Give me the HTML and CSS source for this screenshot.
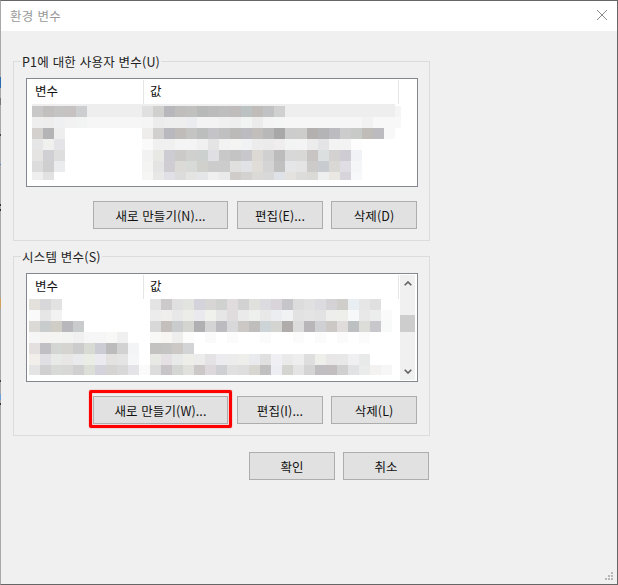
FILE: index.html
```html
<!DOCTYPE html>
<html lang="ko">
<head>
<meta charset="utf-8">
<title>환경 변수</title>
<link rel="stylesheet" href="styles.css">
</head>
<body>
<div class="window">
  <div class="edge-strip"></div>
  <header class="titlebar">
    <span class="title">환경 변수</span>
    <svg class="close" width="10" height="10" viewBox="0 0 10 10"><path d="M0 0L10 10M10 0L0 10"/></svg>
  </header>
  <main class="content">
    <section class="group">
      <h2 class="legend">P1에 대한 사용자 변수(U)</h2>
      <div class="list">
        <div class="list-head"><div class="col col-name">변수</div><div class="col col-value">값</div></div>
        <svg class="mosaic" width="390" height="82" viewBox="27 104 390 82" aria-hidden="true">
          <rect class="band" x="32" y="104" width="363" height="13"/>
          <g transform="translate(0 106)">
            <rect x="32" fill="#c8c8c8"/><rect x="43" fill="#c2c0be"/><rect x="54" fill="#c4c4c2"/><rect x="65" fill="#c6c2c2"/><rect x="76" fill="#ccced0"/>
            <rect x="142" fill="#e0e0e0"/><rect x="153" fill="#d0d0ce"/><rect x="164" fill="#b8b8bc"/><rect x="175" fill="#c0bebc"/><rect x="186" fill="#c0c0be"/><rect x="197" fill="#b8baba"/><rect x="208" fill="#bcbcbc"/><rect x="219" fill="#bebebe"/><rect x="230" fill="#c0bcbc"/><rect x="241" fill="#bcc2c2"/><rect x="252" fill="#c0bcba"/><rect x="263" fill="#c0c2c4"/><rect x="274" fill="#d0d0d0"/>
            <rect x="395" width="6" fill="#f5f5f5" class="narrow"/>
          </g>
          <g transform="translate(0 117)">
            <rect x="32" fill="#eeeeee"/><rect x="43" fill="#ededed"/><rect x="54" fill="#eef0f1"/><rect x="65" fill="#f2f2f2"/><rect x="76" fill="#f2f4f4"/><rect x="87" fill="#f6f6f6"/><rect x="98" fill="#f6f6f6"/><rect x="109" fill="#f6f6f6"/><rect x="120" fill="#f6f6f6"/><rect x="131" fill="#f6f6f6"/>
            <rect x="142" fill="#f5f5f5"/><rect x="153" fill="#ececec"/><rect x="164" fill="#eeeeee"/><rect x="175" fill="#eeeeee"/><rect x="186" fill="#ebecef"/><rect x="197" fill="#f3f3f3"/><rect x="208" fill="#f3f3f3"/><rect x="219" fill="#f0f0f0"/><rect x="230" fill="#eeeeee"/><rect x="241" fill="#f2f4f4"/><rect x="252" fill="#ececec"/><rect x="263" fill="#f4f4f4"/><rect x="274" fill="#f4f6f6"/><rect x="285" fill="#f6f6f6"/><rect x="296" fill="#f6f6f6"/><rect x="307" fill="#f6f6f6"/><rect x="318" fill="#f6f6f6"/><rect x="329" fill="#f6f6f6"/><rect x="340" fill="#f6f6f6"/><rect x="351" fill="#f6f6f6"/><rect x="362" fill="#f2f2f2"/><rect x="373" fill="#f8f8f8"/><rect x="384" fill="#f8f8f8"/><rect x="395" class="narrow" fill="#f8f8f8"/>
          </g>
          <g transform="translate(0 128)">
            <rect x="32" fill="#d4d0ce"/><rect x="43" fill="#b4b4b6"/><rect x="54" fill="#eeeeee"/>
            <rect x="142" fill="#efedeb"/><rect x="153" fill="#d2d0ce"/><rect x="164" fill="#b8b8be"/><rect x="175" fill="#c0bcba"/><rect x="186" fill="#c4c4c2"/><rect x="197" fill="#bcbebe"/><rect x="208" fill="#c4c4c8"/><rect x="219" fill="#c0c0c0"/><rect x="230" fill="#bcbab8"/><rect x="241" fill="#bcbcc0"/><rect x="252" fill="#c2bebc"/><rect x="263" fill="#b8b8b8"/><rect x="274" fill="#a8a8a8"/><rect x="285" fill="#cccccc"/><rect x="296" fill="#cdcdcb"/><rect x="307" fill="#b4b0b0"/><rect x="318" fill="#b4b4b6"/><rect x="329" fill="#bcbcc0"/><rect x="340" fill="#cccccc"/><rect x="351" fill="#c8cac8"/><rect x="362" fill="#c0bcb8"/><rect x="373" fill="#bcbcc0"/><rect x="384" fill="#f8f8f8"/>
          </g>
          <g transform="translate(0 139)">
            <rect x="32" fill="#e6e6e6"/><rect x="43" fill="#f0f0ee"/><rect x="54" fill="#e4e4e8"/>
            <rect x="142" fill="#fafafa"/><rect x="153" fill="#f0f0f0"/><rect x="164" fill="#f0f0f0"/><rect x="175" fill="#f4f4f4"/><rect x="186" fill="#f4f4f4"/><rect x="197" fill="#f0f0f0"/><rect x="208" fill="#e4e4e4"/><rect x="219" fill="#f2f2f2"/><rect x="230" fill="#f4f4f2"/><rect x="241" fill="#f0f2f4"/><rect x="252" fill="#ececec"/><rect x="263" fill="#ebebeb"/><rect x="274" fill="#efeded"/><rect x="285" fill="#f2f4f4"/><rect x="296" fill="#f4f4f4"/><rect x="307" fill="#ececec"/><rect x="318" fill="#e4e4e6"/><rect x="329" fill="#f3f3f3"/><rect x="340" fill="#f3f3f3"/><rect x="351" fill="#fdfdfd"/>
          </g>
          <g transform="translate(0 150)">
            <rect x="32" fill="#e6e4e2"/><rect x="43" fill="#d0d0d4"/><rect x="54" fill="#dedede"/>
            <rect x="142" fill="#f2f2f2"/><rect x="153" fill="#e8e8e4"/><rect x="164" fill="#ccccd2"/><rect x="175" fill="#cccac8"/><rect x="186" fill="#d0d0ce"/><rect x="197" fill="#ccd0ce"/><rect x="208" fill="#e0e0e4"/><rect x="219" fill="#c8c8c8"/><rect x="230" fill="#c4c4c4"/><rect x="241" fill="#c8c8cc"/><rect x="252" fill="#dcd8d4"/><rect x="263" fill="#d0d0d0"/><rect x="274" fill="#bcbcbc"/><rect x="285" fill="#d8d8d8"/><rect x="296" fill="#d8d8d6"/><rect x="307" fill="#c8c4c4"/><rect x="318" fill="#dcdfe0"/><rect x="329" fill="#d4d2d0"/><rect x="340" fill="#d0ccd4"/><rect x="351" fill="#f0f2f5"/>
          </g>
          <g transform="translate(0 161)">
            <rect x="32" fill="#dcdcdc"/><rect x="43" fill="#cfcfcf"/><rect x="54" fill="#eaecee"/>
            <rect x="142" fill="#f4f4f2"/><rect x="153" fill="#e4e4e4"/><rect x="164" fill="#cfccd2"/><rect x="175" fill="#dcdad6"/><rect x="186" fill="#d8dad8"/><rect x="197" fill="#d0d0cc"/><rect x="208" fill="#cccccc"/><rect x="219" fill="#cccccc"/><rect x="230" fill="#e0e0de"/><rect x="241" fill="#e0e2e6"/><rect x="252" fill="#e0dcd8"/><rect x="263" fill="#d4d4d4"/><rect x="274" fill="#c0c0c0"/><rect x="285" fill="#e4e6e8"/><rect x="296" fill="#e4e4e4"/><rect x="307" fill="#cdcbc9"/><rect x="318" fill="#c8ccd0"/><rect x="329" fill="#dad8d4"/><rect x="340" fill="#e0dee4"/><rect x="351" fill="#f4f6f8"/>
          </g>
          <g class="last-user" transform="translate(0 172)">
            <rect x="32" fill="#efefef"/><rect x="43" fill="#e2e2e2"/>
            <rect x="142" fill="#f6f6f4"/><rect x="153" fill="#e8e8e6"/><rect x="164" fill="#e0e0e6"/><rect x="175" fill="#dcdcdc"/><rect x="186" fill="#e4e4e2"/><rect x="197" fill="#e4e6e8"/><rect x="208" fill="#f0f0f0"/><rect x="219" fill="#eaeaea"/><rect x="230" fill="#d0ccca"/><rect x="241" fill="#d4d2d0"/><rect x="252" fill="#dcdad6"/><rect x="263" fill="#d8d8d8"/><rect x="274" fill="#dfe2e6"/><rect x="285" fill="#e4e2de"/><rect x="296" fill="#dcdcda"/><rect x="307" fill="#dadad6"/><rect x="318" fill="#eef0f0"/><rect x="329" fill="#ebe8e4"/><rect x="340" fill="#d8d4dc"/><rect x="351" fill="#f6f8fa"/>
          </g>
        </svg>
      </div>
      <div class="actions">
        <button class="btn btn-new" type="button">새로 만들기(N)...</button>
        <button class="btn btn-edit" type="button">편집(E)...</button>
        <button class="btn" type="button">삭제(D)</button>
      </div>
    </section>

    <section class="group group-system">
      <h2 class="legend">시스템 변수(S)</h2>
      <div class="list">
        <div class="list-head"><div class="col col-name">변수</div><div class="col col-value">값</div></div>
        <svg class="mosaic" width="390" height="82" viewBox="27 299 390 82" aria-hidden="true">
          <g transform="translate(0 299)">
            <rect x="29" fill="#e4e0dc"/><rect x="40" fill="#d8d8da"/><rect x="51" fill="#e2e2e2"/>
            <rect x="150" fill="#e4e4e4"/><rect x="161" fill="#cccaca"/><rect x="172" fill="#e0e0e0"/><rect x="183" fill="#e2e4e0"/><rect x="194" fill="#d4d2da"/><rect x="205" fill="#d8d6d4"/><rect x="216" fill="#d0d2d0"/><rect x="227" fill="#e0dcde"/><rect x="238" fill="#d2d2d2"/><rect x="249" fill="#e0e0dc"/><rect x="260" fill="#dcdce0"/><rect x="271" fill="#d8d4da"/><rect x="282" fill="#c6c6ca"/><rect x="293" fill="#dcdcdc"/><rect x="304" fill="#e0e0e0"/><rect x="315" fill="#dcdce0"/><rect x="326" fill="#d4d2d4"/><rect x="337" fill="#d0ceca"/><rect x="348" fill="#e8eef2"/><rect x="359" fill="#e6e6e6"/><rect x="370" fill="#e0e0e0"/>
          </g>
          <g transform="translate(0 310)">
            <rect x="29" fill="#fafafa"/><rect x="40" fill="#e6e6e6"/><rect x="51" fill="#f2f2f2"/>
            <rect x="150" fill="#ececec"/><rect x="161" fill="#f0eeec"/><rect x="172" fill="#e8e8e8"/><rect x="183" fill="#ecece8"/><rect x="194" fill="#eaeaee"/><rect x="205" fill="#f0f0ec"/><rect x="216" fill="#e6e6e6"/><rect x="227" fill="#e0dcde"/><rect x="238" fill="#eaeaea"/><rect x="249" fill="#eef0ee"/><rect x="260" fill="#e8e8e8"/><rect x="271" fill="#ecedf0"/><rect x="282" fill="#f0f2f4"/><rect x="293" fill="#e2e2e2"/><rect x="304" fill="#e4e4e4"/><rect x="315" fill="#e2e2e2"/><rect x="326" fill="#eeeeec"/><rect x="337" fill="#eeeeea"/><rect x="348" fill="#f6f8fa"/><rect x="359" fill="#e8e8e8"/><rect x="370" fill="#eceeee"/><rect x="381" fill="#fafafa"/>
          </g>
          <g transform="translate(0 321)">
            <rect x="29" fill="#dcdad6"/><rect x="40" fill="#c8cccc"/><rect x="51" fill="#d0ccc6"/><rect x="62" fill="#b8b8bc"/><rect x="73" fill="#c8cccc"/>
            <rect x="150" fill="#d8d8d8"/><rect x="161" fill="#c4bebc"/><rect x="172" fill="#c8cccc"/><rect x="183" fill="#d4d4d0"/><rect x="194" fill="#b0b0b2"/><rect x="205" fill="#d4d4d4"/><rect x="216" fill="#bcbcc0"/><rect x="227" fill="#d8d8da"/><rect x="238" fill="#ccc8c6"/><rect x="249" fill="#c0bebc"/><rect x="260" fill="#ccd4d8"/><rect x="271" fill="#d4d4d0"/><rect x="282" fill="#b0acac"/><rect x="293" fill="#dcdcdc"/><rect x="304" fill="#b8b6b8"/><rect x="315" fill="#cfd0d4"/><rect x="326" fill="#ccc8c6"/><rect x="337" fill="#e0dcdc"/><rect x="348" fill="#bcc0c0"/><rect x="359" fill="#dcdcd8"/><rect x="370" fill="#c8c8cc"/><rect x="381" fill="#f8fafa"/>
          </g>
          <g transform="translate(0 332)">
            <rect x="29" fill="#f6f6f6"/><rect x="40" fill="#f6f4f2"/><rect x="51" fill="#f4f4f2"/><rect x="62" fill="#f2f4f2"/><rect x="73" fill="#f0f0f0"/><rect x="84" fill="#f6f6f6"/><rect x="95" fill="#f6f6f6"/><rect x="106" fill="#f8f8f6"/><rect x="117" fill="#f0f0f0"/>
            <rect x="150" fill="#f8f8f6"/><rect x="161" fill="#f8f6f2"/><rect x="172" fill="#eeeeee"/><rect x="183" fill="#fcfcfa"/><rect x="205" fill="#fafafa"/><rect x="227" fill="#fbfbfb"/><rect x="260" fill="#fbfbfb"/><rect x="293" fill="#fbfbfb"/><rect x="315" fill="#fbfbfb"/><rect x="337" fill="#fbfbfb"/><rect x="359" fill="#fbfbfb"/>
          </g>
          <g transform="translate(0 343)">
            <rect x="29" fill="#e4e0e0"/><rect x="40" fill="#c0c0c4"/><rect x="51" fill="#d4d6d4"/><rect x="62" fill="#d6d4d0"/><rect x="73" fill="#cccccc"/><rect x="84" fill="#d8dad4"/><rect x="95" fill="#ccccd4"/><rect x="106" fill="#bcbcbc"/><rect x="117" fill="#d2d2d2"/><rect x="128" fill="#f2f4f6"/>
            <rect x="150" fill="#c4c2c0"/><rect x="161" fill="#c4c4c2"/><rect x="172" fill="#ccc8c6"/><rect x="183" fill="#d2d4d6"/>
          </g>
          <g transform="translate(0 354)">
            <rect x="29" fill="#f2eeea"/><rect x="40" fill="#e0e0e4"/><rect x="51" fill="#e8eae8"/><rect x="62" fill="#e8e6e4"/><rect x="73" fill="#e8eaec"/><rect x="84" fill="#eaece6"/><rect x="95" fill="#eaeaf0"/><rect x="106" fill="#e4e2e0"/><rect x="117" fill="#e4e4e4"/><rect x="128" fill="#f4f6f8"/>
            <rect x="150" fill="#e8e8e4"/><rect x="161" fill="#e4e0e4"/><rect x="172" fill="#e8eaea"/><rect x="183" fill="#eeeee8"/><rect x="194" fill="#ececec"/><rect x="205" fill="#e4e2e4"/><rect x="216" fill="#ececf0"/><rect x="227" fill="#ececec"/><rect x="238" fill="#eeeeea"/><rect x="249" fill="#e8eaee"/><rect x="260" fill="#e0e0e0"/><rect x="271" fill="#f0f0f4"/><rect x="282" fill="#eaeaea"/><rect x="293" fill="#eeeeee"/><rect x="304" fill="#dedede"/><rect x="315" fill="#eeeeea"/><rect x="326" fill="#e8e6e6"/><rect x="337" fill="#e8e8e8"/><rect x="348" fill="#f0f0f2"/><rect x="359" fill="#e8eaea"/>
          </g>
          <g class="last-system" transform="translate(0 365)">
            <rect x="29" fill="#e4e4e4"/><rect x="40" fill="#d0d0d0"/><rect x="51" fill="#d8dad8"/><rect x="62" fill="#d8d8d6"/><rect x="73" fill="#d0d0d0"/><rect x="84" fill="#dcdfd8"/><rect x="95" fill="#d4d2da"/><rect x="106" fill="#d6d4d2"/><rect x="117" fill="#d8d8d8"/><rect x="128" fill="#e4e4e8"/><rect x="139" fill="#fafafa"/>
            <rect x="150" fill="#dcdcdc"/><rect x="161" fill="#c8c4c8"/><rect x="172" fill="#d4d6d4"/><rect x="183" fill="#e0e0dc"/><rect x="194" fill="#ccc8c8"/><rect x="205" fill="#dcd8dc"/><rect x="216" fill="#ced0d4"/><rect x="227" fill="#e0e0e0"/><rect x="238" fill="#dedede"/><rect x="249" fill="#d8d6d0"/><rect x="260" fill="#c0c0c0"/><rect x="271" fill="#eceef4"/><rect x="282" fill="#d4d4d0"/><rect x="293" fill="#e4e4e4"/><rect x="304" fill="#d4d4d4"/><rect x="315" fill="#c0bec0"/><rect x="326" fill="#c2bec0"/><rect x="337" fill="#d0d0d0"/><rect x="348" fill="#e0e2e4"/><rect x="359" fill="#eaecec"/><rect x="370" fill="#f4f2f0"/><rect x="381" fill="#f6f6f6"/>
          </g>
        </svg>
        <div class="scrollbar">
          <div class="arrow"><svg width="8" height="5" viewBox="0 0 8 5"><path d="M.7 4.3L4 1l3.3 3.3"/></svg></div>
          <div class="track"><div class="thumb"></div></div>
          <div class="arrow"><svg width="8" height="5" viewBox="0 0 8 5"><path d="M.7 .7L4 4l3.3-3.3"/></svg></div>
        </div>
      </div>
      <div class="actions">
        <div class="highlight-wrap">
          <button class="btn btn-new btn-flush" type="button">새로 만들기(W)...</button>
          <span class="highlight"></span>
        </div>
        <button class="btn btn-edit" type="button">편집(I)...</button>
        <button class="btn" type="button">삭제(L)</button>
      </div>
    </section>

    <footer class="footer">
      <button class="btn" type="button">확인</button>
      <button class="btn" type="button">취소</button>
    </footer>
  </main>
  <svg class="grip" width="9" height="9" viewBox="0 0 9 9" aria-hidden="true"><path d="M6 0h2v2H6zM3 3h2v2H3zM6 3h2v2H6zM0 6h2v2H0zM3 6h2v2H3zM6 6h2v2H6z"/></svg>
</div>
</body>
</html>
```

FILE: styles.css
```css
* { box-sizing: border-box; }

html, body { margin: 0; padding: 0; }

body {
  width: 618px;
  height: 585px;
  overflow: hidden;
  font-family: "Noto Sans CJK KR", "Noto Sans", sans-serif;
  font-size: 12.5px;
  letter-spacing: .1px;
  color: #111;
  background: #f0f0f0;
}

.window {
  position: relative;
  width: 618px;
  height: 585px;
  background: #f0f0f0;
  border: 1px solid #666;
  border-left-color: #a8a8a8;
}

.edge-strip {
  position: absolute;
  left: -1px;
  top: 0;
  width: 1px;
  height: 100%;
  background: linear-gradient(to bottom,
    #a8a8a8 76px, #2b6cb0 76px, #2b6cb0 87px, #a8a8a8 87px,
    #a8a8a8 97px, #777 97px, #777 104px, #a8a8a8 104px,
    #a8a8a8 133px, #444 133px, #444 135px, #a8a8a8 135px,
    #a8a8a8 163px, #4a86c8 163px, #4a86c8 164px, #a8a8a8 164px,
    #a8a8a8 203px, #333 203px, #333 205px, #a8a8a8 205px,
    #a8a8a8 208px, #333 208px, #333 210px, #a8a8a8 210px,
    #a8a8a8 297px, #d0a060 297px, #d0a060 307px, #a8a8a8 307px,
    #a8a8a8 379px, #444 379px, #444 381px, #a8a8a8 381px,
    #a8a8a8 393px, #6a9fd8 393px, #6a9fd8 399px, #a8a8a8 399px,
    #a8a8a8 402px, #333 402px, #333 404px, #a8a8a8 404px);
}

/* Title bar */
.titlebar {
  display: flex;
  align-items: center;
  justify-content: space-between;
  height: 30px;
  padding: 0 10px 2px 9px;
  background: #fff;
}

.title {
  color: #999;
  font-size: 12.5px;
  letter-spacing: .3px;
}

.close path {
  stroke: #8a8a8a;
  stroke-width: 1;
  fill: none;
}

/* Body */
.content {
  width: 430px;
  padding: 30px 0 0 12px;
}

.group {
  position: relative;
  width: 417px;
  height: 180px;
  padding: 16px 0 0 12px;
  border: 1px solid #dcdcdc;
}

.group-system { margin-top: 15px; }

.legend {
  position: absolute;
  top: -9px;
  left: 7px;
  margin: 0;
  padding: 0 1px;
  background: #f0f0f0;
  font-size: 12.5px;
  font-weight: 400;
  line-height: 17px;
  letter-spacing: .2px;
  color: #222;
}

/* List */
.list {
  position: relative;
  width: 392px;
  height: 109px;
  background: #fff;
  border: 1px solid #828790;
}

.list-head {
  display: flex;
  height: 25px;
  padding-top: 1px;
}

.col {
  line-height: 22px;
  border-right: 1px solid #e5e5e5;
}

.col-name {
  width: 117px;
  padding-left: 8px;
}

.col-value {
  width: 255px;
  padding-left: 6px;
}

.mosaic {
  display: block;
  shape-rendering: crispEdges;
}

.mosaic rect {
  width: 11px;
  height: 11px;
}

.mosaic rect.band {
  width: 363px;
  height: 13px;
  fill: #eeeeee;
}

.mosaic rect.narrow { width: 6px; }
.mosaic .last-user rect { height: 8px; }
.mosaic .last-system rect { height: 10px; }

/* Scrollbar */
.scrollbar {
  position: absolute;
  top: 1px;
  right: 2px;
  bottom: 1px;
  display: flex;
  flex-direction: column;
  width: 15px;
  background: #f0f0f0;
}

.arrow {
  display: flex;
  align-items: center;
  justify-content: center;
  height: 17px;
}

.arrow path {
  fill: none;
  stroke: #606060;
  stroke-width: 1.6;
}

.track { flex: 1; }

.thumb {
  height: 17px;
  margin-top: 23px;
  background: #cdcdcd;
}

/* Buttons */
.actions {
  display: flex;
  justify-content: flex-end;
  width: 391px;
  margin-top: 14px;
}

.btn {
  display: block;
  width: 86px;
  height: 28px;
  padding: 0;
  font: inherit;
  letter-spacing: inherit;
  color: #111;
  background: #e1e1e1;
  border: 1px solid #adadad;
  border-radius: 0;
}

.btn-new {
  width: 135px;
  margin-right: 9px;
}

.btn-edit { margin-right: 8px; }

.btn-flush { margin-right: 0; }

.highlight-wrap {
  position: relative;
  margin-right: 9px;
}

.highlight {
  position: absolute;
  top: -6px;
  right: -4px;
  bottom: -4px;
  left: -4px;
  border: 3px solid #ff0000;
  border-radius: 2px;
  box-shadow: 0 0 1px #ff0000, inset 0 0 1px #ff0000;
  pointer-events: none;
}

.footer {
  display: flex;
  justify-content: flex-end;
  gap: 8px;
  width: 416px;
  margin-top: 16px;
}

.grip {
  position: absolute;
  right: 3px;
  bottom: 3px;
}

.grip path { fill: #b8b8b8; }
```
